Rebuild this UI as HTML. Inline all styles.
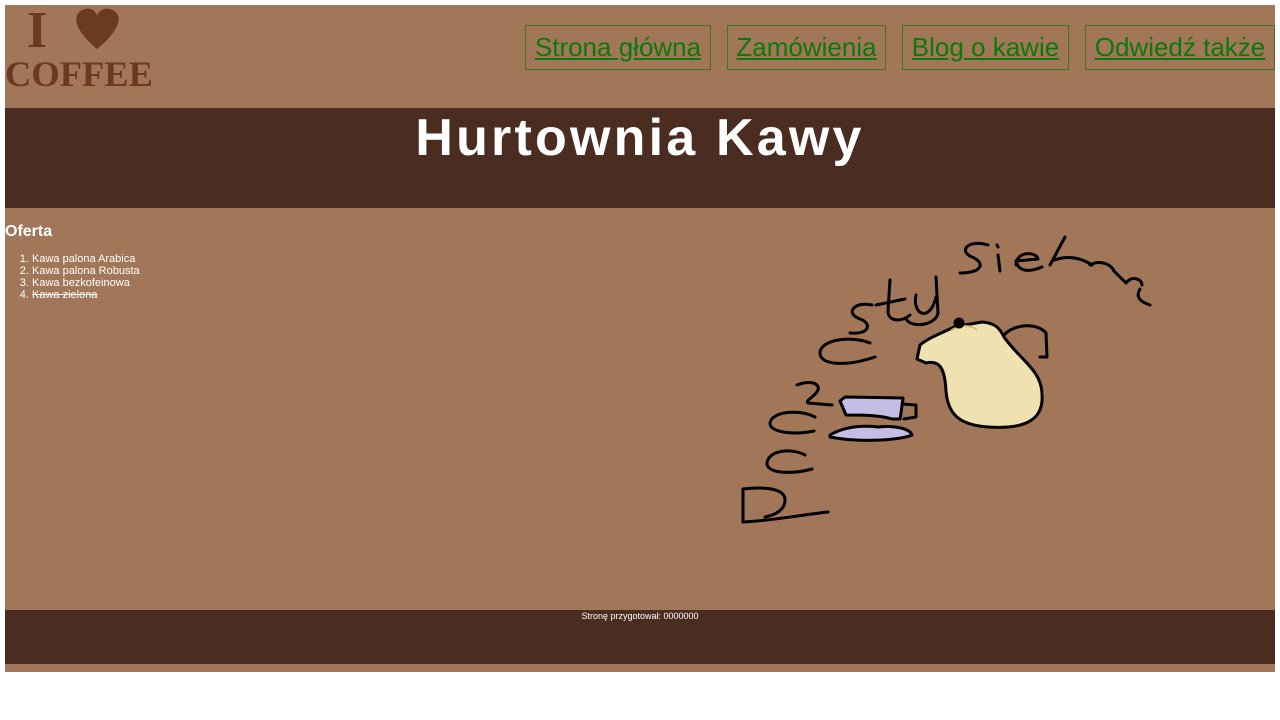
<!DOCTYPE html>
<html><head><meta charset="utf-8"><style>
body{margin:0;background:#fff;font-family:"Liberation Sans",Arial,sans-serif}
#w{position:absolute;left:5px;top:5px;width:1270px;height:667px;background:#a27658;overflow:hidden}
#hd{position:absolute;left:0;top:0;width:1270px;height:103px}
.nav{position:absolute;top:20px;height:43px;border:1px solid #3c7a22;color:#0a7a0a;font-size:26px;line-height:43px;text-decoration:underline;padding:0 7px;white-space:nowrap;box-sizing:border-box;height:45px;text-align:center}
#band{position:absolute;left:0;top:103px;width:1270px;height:100px;background:#4a2c21;color:#fff;text-align:center;font-weight:bold;font-size:52px;letter-spacing:3.2px;line-height:60px}
#ct{position:absolute;left:0;top:203px;width:1270px;height:402px}
h3{margin:0;position:absolute;left:0;top:15px;color:#fff;font-size:16px}
ol{position:absolute;left:0;top:45px;margin:0;padding-left:27px;color:#fff;font-size:11px;line-height:12px}
#ft{position:absolute;left:0;top:605px;width:1270px;height:54px;background:#4a2c21;color:#fff;font-size:9px;text-align:center;line-height:12px}
</style></head><body><div id="w">
<div id="hd">
<svg width="150" height="85" style="position:absolute;left:0;top:0">
<text x="22" y="42" font-family="Liberation Serif" font-weight="bold" font-size="52" fill="#6a3a22">I</text>
<path d="M92 44 C68 24 66 8 80 4 C88 2 92 8 92 12 C92 8 97 2 105 4 C119 8 117 24 92 44Z" fill="#6a3a22"/>
<text x="0" y="81" font-family="Liberation Serif" font-weight="bold" font-size="36" fill="#6a3a22" textLength="148" lengthAdjust="spacingAndGlyphs">COFFEE</text>
</svg>
<a class="nav" style="left:520px;width:186px">Strona główna</a>
<a class="nav" style="left:722px;width:159px">Zamówienia</a>
<a class="nav" style="left:897px;width:167px">Blog o kawie</a>
<a class="nav" style="left:1080px;width:190px">Odwiedź także</a>
</div>
<div id="band">Hurtownia Kawy</div>
<div id="ct">
<h3>Oferta</h3>
<ol><li>Kawa palona Arabica</li><li>Kawa palona Robusta</li><li>Kawa bezkofeinowa</li><li><s>Kawa zielona</s></li></ol>
<svg width="440" height="320" style="position:absolute;left:715px;top:17px" fill="none" stroke="#000" stroke-width="3" stroke-linecap="round" stroke-linejoin="round">
<path d="M23 297 L23 264 C40 262 65 262 65 275 C65 285 55 290 45 292 M23 297 C50 296 80 290 108 287"/>
<path d="M85 230 C70 222 48 226 47 238 C46 248 70 250 92 244"/>
<path d="M95 192 C80 184 52 186 50 198 C50 208 75 210 94 206"/>
<path d="M77 160 C90 155 100 158 98 165 C95 172 85 175 88 178 L112 180"/>
<path d="M150 118 C130 110 100 115 100 128 C100 140 125 142 155 132 M100 128"/>
<path d="M152 80 C135 76 124 88 140 94 C152 98 150 110 130 108"/>
<path d="M170 55 L168 86 C168 96 180 98 190 90 M156 80 L185 74"/>
<path d="M196 70 C192 90 210 98 216 72 M216 52 L218 88 C216 100 192 104 186 94"/>
<path d="M268 20 C248 14 238 26 252 32 C266 38 262 48 240 48"/>
<path d="M278 30 L280 46 M277 20 L278 22"/>
<path d="M296 40 C296 26 316 26 318 34 L296 36 C298 46 308 48 322 42"/>
<path d="M345 12 L330 40 M332 36 C346 30 360 32 372 40 M370 40 C380 34 392 40 394 46 M394 46 L406 58 M406 58 C412 50 422 54 422 60 M420 64 C414 74 424 78 430 80"/>
<path d="M126 190 C140 190 160 190 172 194 L180 194 L181 188 L183 173 L125 172 L120 176 L126 190Z" fill="#c6bde6"/>
<path d="M110 210 C124 202 140 200 158 202 C176 200 190 204 192 210 C180 215 140 218 110 212Z" fill="#c6bde6"/>
<path d="M182 179 L196 180 L196 192 L184 194"/>
<path d="M200 120 C210 112 222 108 234 102 L262 97 C276 98 280 104 284 112 C300 135 322 145 322 170 C324 198 300 204 268 202 C240 200 228 190 226 166 C225 148 222 134 206 138 L197 134Z" fill="#efe2b0"/>
<path d="M232 105 C240 100 250 100 256 104" stroke="#d8c070" stroke-width="2"/>
<path d="M284 110 C295 98 318 98 326 108 L327 132 L320 132"/>
<circle cx="239" cy="98" r="4" fill="#000"/>
</svg>
</div>
<div id="ft">Stronę przygotował: 0000000</div>
</div></body></html>
